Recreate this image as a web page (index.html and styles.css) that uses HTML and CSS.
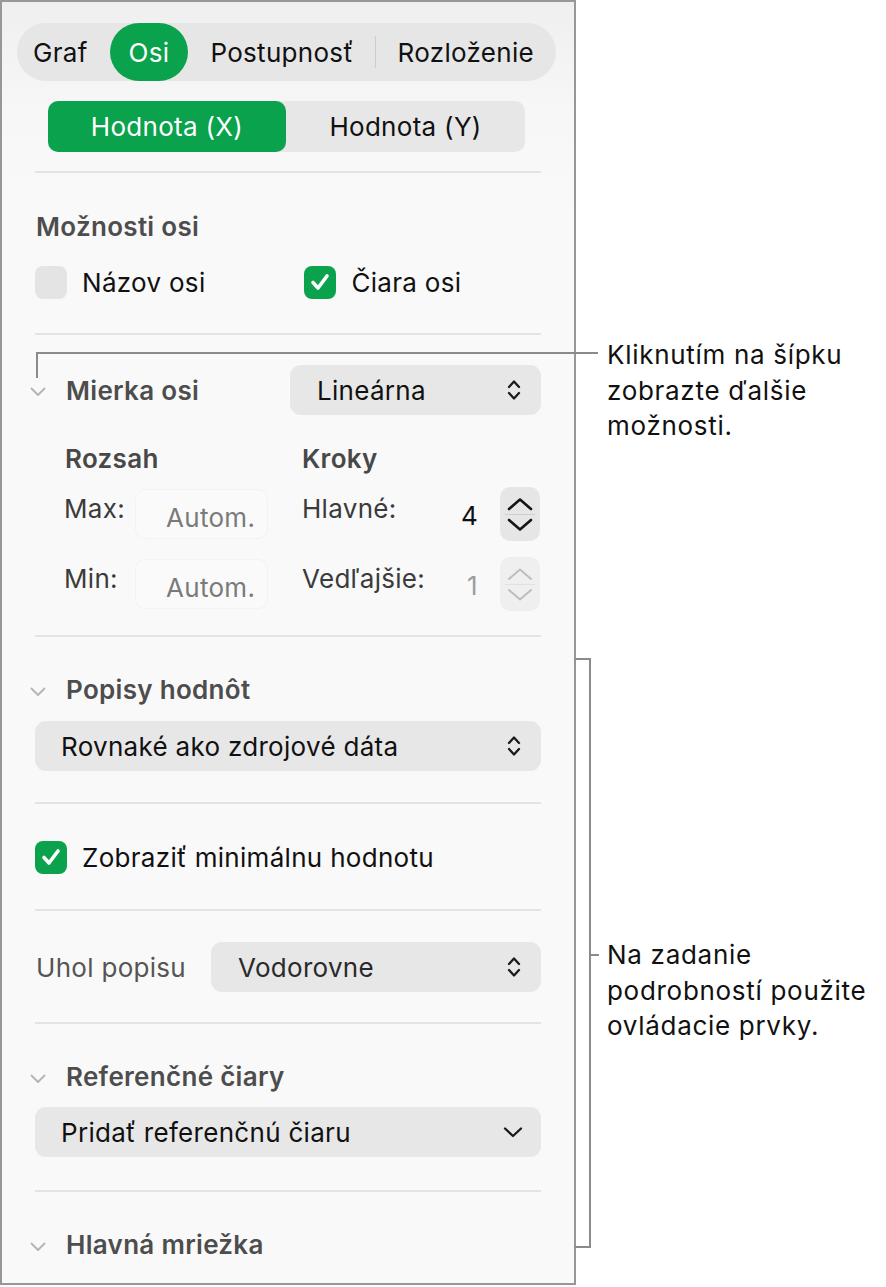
FILE: index.html
```html
<!DOCTYPE html>
<html lang="sk">
<head>
  <meta charset="UTF-8">
  <meta name="viewport" content="width=device-width, initial-scale=1.0">
  <title>Osi – formát grafu</title>
  <link rel="stylesheet" href="styles.css">
</head>
<body>
  <div class="page">

    <aside class="panel">
      <nav class="tabs">
        <span class="tab first">Graf</span>
        <span class="tab active">Osi</span>
        <span class="tab">Postupnosť</span>
        <span class="tab-sep"></span>
        <span class="tab">Rozloženie</span>
      </nav>

      <div class="segmented">
        <span class="seg active">Hodnota (X)</span>
        <span class="seg">Hodnota (Y)</span>
      </div>

      <hr class="sep sep-1">

      <!-- Možnosti osi -->
      <div class="head-row head-plain">Možnosti osi</div>
      <div class="check-row check-row-1">
        <span class="check"><span class="box"></span>Názov osi</span>
        <span class="check second">
          <span class="box on"><svg width="24" height="24" viewBox="0 0 24 24"><polyline points="5,12.5 10,18 19,6" /></svg></span>
          Čiara osi
        </span>
      </div>

      <hr class="sep sep-2">

      <!-- Mierka osi -->
      <div class="scale-row">
        <span class="disclose"><svg width="16" height="10" viewBox="0 0 16 10"><polyline points="1.5,1.5 8,8 14.5,1.5" /></svg></span>
        <span class="head-text">Mierka osi</span>
        <span class="popup popup-scale">
          Lineárna
          <svg class="updown" width="14" height="24" viewBox="0 0 14 24"><polyline points="2,9 7,3.5 12,9" /><polyline points="2,15 7,20.5 12,15" /></svg>
        </span>
      </div>

      <div class="range-head">
        <span class="rh-1">Rozsah</span>
        <span>Kroky</span>
      </div>

      <div class="range-row range-max">
        <span class="rlabel">Max:</span>
        <span class="field">Autom.</span>
        <span class="rlabel rlabel-2">Hlavné:</span>
        <span class="num">4</span>
        <span class="stepper">
          <svg width="28" height="17" viewBox="0 0 28 17"><polyline points="3,13 14,3.5 25,13" /></svg>
          <i></i>
          <svg width="28" height="17" viewBox="0 0 28 17"><polyline points="3,4 14,13.5 25,4" /></svg>
        </span>
      </div>

      <div class="range-row range-min">
        <span class="rlabel">Min:</span>
        <span class="field">Autom.</span>
        <span class="rlabel rlabel-2">Vedľajšie:</span>
        <span class="num off">1</span>
        <span class="stepper off">
          <svg width="28" height="17" viewBox="0 0 28 17"><polyline points="3,13 14,3.5 25,13" /></svg>
          <i></i>
          <svg width="28" height="17" viewBox="0 0 28 17"><polyline points="3,4 14,13.5 25,4" /></svg>
        </span>
      </div>

      <hr class="sep sep-3">

      <!-- Popisy hodnôt -->
      <div class="head-row head-3">
        <span class="disclose"><svg width="16" height="10" viewBox="0 0 16 10"><polyline points="1.5,1.5 8,8 14.5,1.5" /></svg></span>
        <span class="head-text">Popisy hodnôt</span>
      </div>
      <div class="popup popup-wide popup-3">
        Rovnaké ako zdrojové dáta
        <svg class="updown" width="14" height="24" viewBox="0 0 14 24"><polyline points="2,9 7,3.5 12,9" /><polyline points="2,15 7,20.5 12,15" /></svg>
      </div>

      <hr class="sep sep-4">

      <div class="check-row check-row-2">
        <span class="check">
          <span class="box on"><svg width="24" height="24" viewBox="0 0 24 24"><polyline points="5,12.5 10,18 19,6" /></svg></span>
          Zobraziť minimálnu hodnotu
        </span>
      </div>

      <hr class="sep sep-5">

      <div class="angle-row">
        <span class="angle-label">Uhol popisu</span>
        <span class="popup popup-angle">
          Vodorovne
          <svg class="updown" width="14" height="24" viewBox="0 0 14 24"><polyline points="2,9 7,3.5 12,9" /><polyline points="2,15 7,20.5 12,15" /></svg>
        </span>
      </div>

      <hr class="sep sep-6">

      <!-- Referenčné čiary -->
      <div class="head-row head-7">
        <span class="disclose"><svg width="16" height="10" viewBox="0 0 16 10"><polyline points="1.5,1.5 8,8 14.5,1.5" /></svg></span>
        <span class="head-text">Referenčné čiary</span>
      </div>
      <div class="popup popup-wide popup-7">
        Pridať referenčnú čiaru
        <svg class="down" width="20" height="12" viewBox="0 0 20 12"><polyline points="2,2.5 10,10 18,2.5" /></svg>
      </div>

      <hr class="sep sep-7">

      <div class="head-row head-8">
        <span class="disclose"><svg width="16" height="10" viewBox="0 0 16 10"><polyline points="1.5,1.5 8,8 14.5,1.5" /></svg></span>
        <span class="head-text">Hlavná mriežka</span>
      </div>
    </aside>

    <!-- callouts -->
    <span class="leader"></span>
    <p class="note note-1">Kliknutím na šípku<br>zobrazte ďalšie<br>možnosti.</p>

    <span class="bracket"></span>
    <span class="bracket-tick"></span>
    <p class="note note-2">Na zadanie<br>podrobností použite<br>ovládacie prvky.</p>

  </div>
</body>
</html>
```

FILE: styles.css
```css
body {
  margin: 0;
  background: #fff;
  font-family: Inter, "Noto Sans", sans-serif;
  font-size: 26px;
  letter-spacing: 0.3px;
  color: #111;
}

.page {
  position: relative;
  width: 886px;
  height: 1287px;
}

/* Inspector panel */
.panel {
  box-sizing: border-box;
  width: 576px;
  height: 1285px;
  padding: 21px 33px 0;
  border: 2px solid #979797;
  background: linear-gradient(#efefef 0, #f7f7f7 110px, #f9f9f9 200px);
  overflow: hidden;
}

/* Top tabs */
.tabs {
  display: flex;
  align-items: center;
  height: 58px;
  margin: 0 -15px 0 -18px;
  border-radius: 29px;
  background: #e6e6e6;
}
.tab {
  display: flex;
  align-items: center;
  height: 100%;
  padding: 0 22px;
  border-radius: 29px;
}
.tab.first { padding-left: 16px; padding-right: 22px; }
.tab.active {
  padding: 0 19px;
  background: #0aa24c;
  color: #fff;
}
.tab-sep {
  width: 2px;
  height: 32px;
  background: #cdcdcd;
}

/* Hodnota X / Y */
.segmented {
  display: grid;
  grid-template-columns: 238px 1fr;
  height: 51px;
  margin: 20px 16px 0 13px;
  border-radius: 10px;
  background: #e7e7e7;
}
.seg {
  display: flex;
  align-items: center;
  justify-content: center;
  border-radius: 10px;
}
.seg.active {
  background: #0aa24c;
  color: #fff;
}

/* Dividers */
.sep {
  height: 2px;
  margin: 0;
  border: 0;
  background: #e3e3e3;
}
.sep-1 { margin-top: 19px; }
.sep-2 { margin-top: 31px; }
.sep-3 { margin-top: 24px; }
.sep-4 { margin-top: 31px; }
.sep-5 { margin-top: 32px; }
.sep-6 { margin-top: 30px; }
.sep-7 { margin-top: 33px; }

/* Section headings */
.head-row {
  display: flex;
  align-items: center;
  height: 40px;
}
.head-plain {
  margin-top: 33px;
  padding-left: 1px;
  font-weight: 600;
  color: #4d4d4d;
}
.head-3, .head-7, .head-8 { margin-top: 32px; }
.head-text {
  font-weight: 600;
  color: #4d4d4d;
}
.disclose {
  display: flex;
  justify-content: center;
  width: 20px;
  margin: 4px 18px 0 -7px;
}
.head-3 .disclose, .head-7 .disclose, .head-8 .disclose { margin-top: 6px; }
.disclose polyline {
  fill: none;
  stroke: #b4b4b4;
  stroke-width: 1.8;
  stroke-linecap: round;
  stroke-linejoin: round;
}

/* Checkboxes */
.check-row {
  display: flex;
  align-items: center;
  height: 40px;
}
.check-row-1 { margin-top: 16px; }
.check-row-2 { margin-top: 33px; }
.check {
  display: flex;
  align-items: center;
  gap: 15px;
}
.check.second { margin-left: 99px; }
.box {
  display: flex;
  align-items: center;
  justify-content: center;
  width: 32px;
  height: 33px;
  border-radius: 8px;
  background: #e4e4e4;
}
.box.on { background: #0aa24c; }
.box polyline {
  fill: none;
  stroke: #fff;
  stroke-width: 3.6;
  stroke-linecap: round;
  stroke-linejoin: round;
}

/* Pop-up buttons */
.popup {
  box-sizing: border-box;
  display: flex;
  align-items: center;
  justify-content: space-between;
  height: 50px;
  padding: 0 20px 0 26px;
  border-radius: 11px;
  background: #e7e7e7;
  color: #111;
}
.updown polyline, .down polyline {
  fill: none;
  stroke: #1a1a1a;
  stroke-width: 2.3;
  stroke-linecap: round;
  stroke-linejoin: round;
}
.popup-wide { width: 100%; }
.popup-3 { margin-top: 12px; }
.popup-7 { margin-top: 11px; padding-right: 18px; }

/* Mierka osi */
.scale-row {
  display: flex;
  align-items: center;
  height: 50px;
  margin-top: 30px;
}
.popup-scale {
  width: 251px;
  margin-left: auto;
  padding-left: 27px;
}

.range-head {
  display: flex;
  align-items: center;
  height: 36px;
  margin-top: 25px;
  padding-left: 30px;
  font-weight: 600;
  color: #484848;
}
.rh-1 { width: 237px; }

.range-row {
  display: flex;
  align-items: center;
  height: 54px;
  padding-left: 29px;
}
.range-max { margin-top: 11px; }
.range-min { margin-top: 16px; }
.rlabel {
  align-self: flex-start;
  width: 71px;
  margin-top: 6px;
  color: #3b3b3b;
}
.rlabel-2 { width: 122px; }
.field {
  box-sizing: border-box;
  width: 133px;
  height: 50px;
  margin-right: 34px;
  padding: 12px 0 0 30px;
  border: 1px solid #f3f3f3;
  border-radius: 10px;
  background: #fafafa;
  color: #7a7a7a;
}
.num {
  box-sizing: border-box;
  width: 66px;
  padding-top: 2px;
  padding-right: 12px;
  text-align: right;
  color: #111;
}
.num.off { color: #9d9d9d; }
.stepper {
  display: flex;
  flex-direction: column;
  align-items: center;
  justify-content: center;
  width: 40px;
  height: 54px;
  margin-left: 10px;
  border-radius: 10px;
  background: #e6e6e6;
}
.stepper i {
  width: 30px;
  height: 1px;
  margin: 1px 0;
  background: #cfcfcf;
}
.stepper polyline {
  fill: none;
  stroke: #161616;
  stroke-width: 2.6;
  stroke-linecap: round;
  stroke-linejoin: round;
}
.stepper.off { background: #efefef; }
.stepper.off polyline { stroke: #bdbdbd; stroke-width: 2; }
.stepper.off i { background: #e0e0e0; }

/* Uhol popisu */
.angle-row {
  display: flex;
  align-items: center;
  height: 50px;
  margin-top: 31px;
}
.angle-label {
  width: 175px;
  padding-left: 1px;
  color: #555;
}
.popup-angle {
  flex: 1;
  padding-left: 27px;
  color: #2a2a2a;
}

/* Callouts */
.leader {
  position: absolute;
  left: 36px;
  top: 352px;
  width: 560px;
  height: 24px;
  border-top: 2px solid #8b8b8b;
  border-left: 2px solid #8b8b8b;
}
.bracket {
  position: absolute;
  left: 575px;
  top: 658px;
  width: 14px;
  height: 586px;
  border: 2px solid #8b8b8b;
  border-left: 0;
}
.bracket-tick {
  position: absolute;
  left: 591px;
  top: 954px;
  width: 8px;
  height: 2px;
  background: #8b8b8b;
}
.note {
  position: absolute;
  left: 607px;
  margin: 0;
  font-size: 26px;
  line-height: 35.5px;
  color: #111;
  letter-spacing: 0.7px;
}
.note-1 { top: 337px; }
.note-2 { top: 937px; }
```
